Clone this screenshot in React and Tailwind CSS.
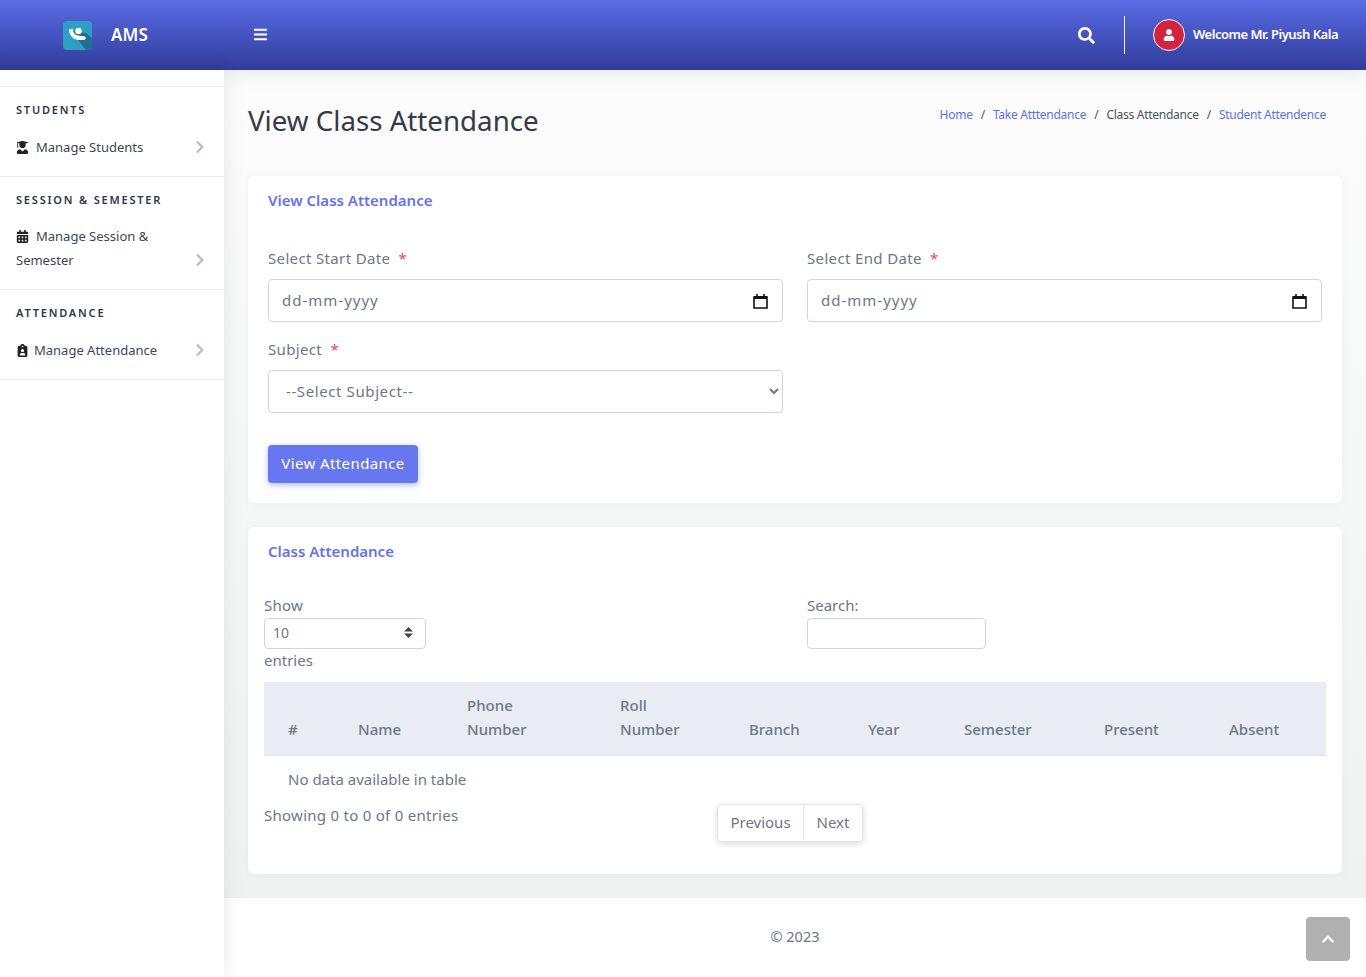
import React from "react";
import { FaBars, FaCalendarAlt, FaChevronRight, FaChevronUp, FaSearch, FaUser, FaUserGraduate } from "react-icons/fa";
import { FaClipboardUser } from "react-icons/fa6";

const font = { fontFamily: '"Noto Sans", "Open Sans", sans-serif' };

const columns = [
  ["#", 70],
  ["Name", 109],
  ["Phone Number", 153],
  ["Roll Number", 129],
  ["Branch", 119],
  ["Year", 96],
  ["Semester", 140],
  ["Present", 125],
  ["Absent", 121],
];

const NavGroup = ({ title, children, className }) => (
  <div className={`border-b border-[#e9ebf3] px-4 ${className}`}>
    <div className="text-[11px] font-semibold uppercase leading-4 tracking-[1.8px] text-[#2d3748]">{title}</div>
    {children}
  </div>
);

const Chevron = ({ className = "" }) => <FaChevronRight className={`text-[14px] text-[#b6bcd0] ${className}`} />;

const DateField = ({ label }) => (
  <div>
    <label className="block h-[31px] text-[15px] leading-5 tracking-[0.35px] text-[#6e7687]">
      {label} <span className="ml-1 text-[#f1416c]">*</span>
    </label>
    <div className="flex h-[43px] items-center justify-between rounded border border-[#d4d2e3] bg-white pl-[13px] pr-[14px] text-[15px] tracking-[1px] text-[#6e7687]">
      <span>dd-mm-yyyy</span>
      <svg width="15" height="16" viewBox="0 0 15 16" fill="none">
        <path d="M1 4h13v11H1z" stroke="#111" strokeWidth="1.6" />
        <path d="M1 3h13v3H1z" fill="#111" />
        <path d="M4 1v3M11 1v3" stroke="#111" strokeWidth="1.6" />
      </svg>
    </div>
  </div>
);

export default function App() {
  return (
    <div className="relative flex h-[977px] flex-col overflow-hidden bg-white" style={font}>
      <header className="z-20 flex h-[70px] shrink-0 items-center bg-gradient-to-b from-[#5a6ce6] to-[#313c9b] text-white shadow-[0_4px_20px_rgba(0,0,0,0.08)]">
        <div className="flex w-[224px] items-center pl-[63px]">
          <svg width="29" height="29" viewBox="0 0 29 29" className="rounded-sm">
            <rect width="29" height="29" fill="#2e9fc4" />
            <path d="M8 10l15 19h6V17l-6-5z" fill="#1f6f94" />
            <circle cx="15.5" cy="10" r="3.2" fill="#fff" />
            <path d="M6 8.5l3.5-1c.5 4 2 6 5 7l7.5 1c1 .5 1 3-.5 3.3-4 .5-8 .4-10.500-1C7.500 15.500 6 12 6 8.500z" fill="#fff" />
          </svg>
          <span className="ml-[19px] text-[17px] font-semibold tracking-[0.1px]">AMS</span>
        </div>
        <FaBars className="mb-[2px] ml-[29px] text-[15px]" />
        <div className="ml-auto flex items-center">
          <FaSearch className="text-[17px]" />
          <div className="ml-[29px] h-[38px] w-px bg-white/90" />
          <div className="ml-[28px] flex h-8 w-8 items-center justify-center rounded-full border border-white bg-[#d2243f]">
            <FaUser className="text-[12px]" />
          </div>
          <span className="ml-2 mr-7 text-[13px] font-semibold tracking-[-0.5px]">Welcome Mr. Piyush Kala</span>
        </div>
      </header>

      <div className="flex min-h-0 flex-1">
        <aside className="z-30 w-[224px] shrink-0 bg-white pt-4 text-[13px] text-[#3d4658] shadow-[0_0_20px_rgba(0,0,0,0.09)]">
          <NavGroup title="Students" className="h-[91px] border-t pt-[15px]">
            <div className="mt-[20px] flex items-center justify-between pr-[1px]">
              <span className="flex items-center gap-[7px]">
                <FaUserGraduate className="text-[13px] text-[#222]" /> Manage Students
              </span>
              <Chevron className="mb-[2px]" />
            </div>
          </NavGroup>
          <NavGroup title="Session & Semester" className="h-[113px] pt-[15px]">
            <div className="mt-[16px] leading-6">
              <div className="flex items-center gap-[7px]">
                <FaCalendarAlt className="text-[13px] text-[#222]" /> Manage Session &
              </div>
              <div className="flex items-center justify-between pr-[1px]">
                Semester <Chevron />
              </div>
            </div>
          </NavGroup>
          <NavGroup title="Attendance" className="h-[90px] pt-[15px]">
            <div className="mt-[20px] flex items-center justify-between pr-[1px]">
              <span className="flex items-center gap-[5px]">
                <FaClipboardUser className="text-[13px] text-[#222]" /> Manage Attendance
              </span>
              <Chevron className="mb-[2px]" />
            </div>
          </NavGroup>
        </aside>

        <div className="flex min-w-0 flex-1 flex-col">
          <main className="flex-1 bg-gradient-to-b from-[#fcfcfc] to-[#f0f2f2] px-6 pt-[30px]">
            <div className="flex h-[76px] items-start justify-between pr-4">
              <h1 className="text-[27.7px] leading-[41px] text-[#343a48]">View Class Attendance</h1>
              <nav className="flex gap-2 pt-[6px] text-[12px] tracking-[-0.27px] text-[#4b5262]">
                <span className="text-[#5f6fe8]">Home</span>
                <span>/</span>
                <span className="text-[#5f6fe8]">Take Atttendance</span>
                <span>/</span>
                <span>Class Attendance</span>
                <span>/</span>
                <span className="text-[#5f6fe8]">Student Attendence</span>
              </nav>
            </div>

            <section className="h-[327px] rounded-md bg-white px-5 pt-[14px] shadow-[0_1px_12px_rgba(0,0,0,0.04)]">
              <h2 className="text-[15px] font-semibold leading-5 text-[#6673ea]">View Class Attendance</h2>
              <div className="mt-[38px] grid grid-cols-2 gap-x-6 gap-y-[17px]">
                <DateField label="Select Start Date" />
                <DateField label="Select End Date" />
                <div>
                  <label className="block h-[31px] text-[15px] leading-5 tracking-[0.35px] text-[#6e7687]">
                    Subject <span className="ml-1 text-[#f1416c]">*</span>
                  </label>
                  <select className="h-[43px] w-full rounded border border-[#d4d2e3] bg-white pb-[2px] pl-[13px] pr-3 text-[15px] tracking-[0.6px] text-[#6e7687]">
                    <option>--Select Subject--</option>
                  </select>
                </div>
              </div>
              <button className="mt-8 h-[38px] w-[150px] rounded bg-[#6777ef] pb-[2px] text-[15px] tracking-[0.4px] text-white shadow-[0_2px_6px_rgba(103,119,239,0.5)]">
                View Attendance
              </button>
            </section>

            <section className="mt-6 h-[347px] rounded-md bg-white px-4 pt-[14px] shadow-[0_1px_12px_rgba(0,0,0,0.04)]">
              <h2 className="px-1 text-[15px] font-semibold leading-5 text-[#6673ea]">Class Attendance</h2>
              <div className="mt-[34px] grid grid-cols-2 text-[15px] text-[#6e7687]">
                <div>
                  <div className="h-[23px] leading-5 tracking-[0.25px]">Show</div>
                  <div className="flex h-[31px] w-[162px] items-center justify-between rounded border border-[#d4d2e3] pb-[2px] pl-2 pr-3 text-[14px]">
                    10
                    <svg width="9" height="11" viewBox="0 0 9 11" fill="#444">
                      <path d="M4.500 0L9 4.500H0zM4.500 11L0 6.500h9z" />
                    </svg>
                  </div>
                  <div className="leading-[22px]">entries</div>
                </div>
                <div className="pl-3">
                  <div className="h-[23px] leading-5">Search:</div>
                  <div className="h-[31px] w-[179px] rounded-sm border border-[#d4d2e3]" />
                </div>
              </div>

              <table className="mt-[11px] w-full table-fixed text-[15px] text-[#6e7687]">
                <colgroup>
                  {columns.map(([name, width]) => (
                    <col key={name} style={{ width }} />
                  ))}
                </colgroup>
                <thead>
                  <tr className="h-[73px] border-b border-[#dfe2ea] bg-[#e9ecf3]">
                    {columns.map(([name]) => (
                      <th key={name} className="pb-[14px] pl-6 pr-6 text-left align-bottom font-medium leading-6">
                        {name}
                      </th>
                    ))}
                  </tr>
                </thead>
                <tbody>
                  <tr>
                    <td colSpan={9} className="h-[48px] pl-6">No data available in table</td>
                  </tr>
                </tbody>
              </table>

              <div className="grid grid-cols-[453px_1fr] text-[15px] text-[#6e7687]">
                <div className="pt-[1px] tracking-[0.27px]">Showing 0 to 0 of 0 entries</div>
                <div className="pt-[1px]">
                  <div className="flex h-[38px] w-[146px] rounded border border-[#e3e1ee] pb-[1px] shadow-[0_2px_6px_rgba(60,60,120,0.18)]">
                    <span className="flex w-[86px] items-center justify-center border-r border-[#e3e1ee]">Previous</span>
                    <span className="flex flex-1 items-center justify-center">Next</span>
                  </div>
                </div>
              </div>
            </section>
          </main>
          <footer className="flex h-[79px] shrink-0 items-center justify-center bg-white pb-[2px] text-[14.5px] text-[#6e7687]">© 2023</footer>
        </div>
      </div>

      <button className="absolute bottom-4 right-4 z-40 flex h-11 w-11 items-center justify-center rounded bg-[#b0b0b0] text-white">
        <FaChevronUp className="text-[14px]" />
      </button>
    </div>
  );
}
